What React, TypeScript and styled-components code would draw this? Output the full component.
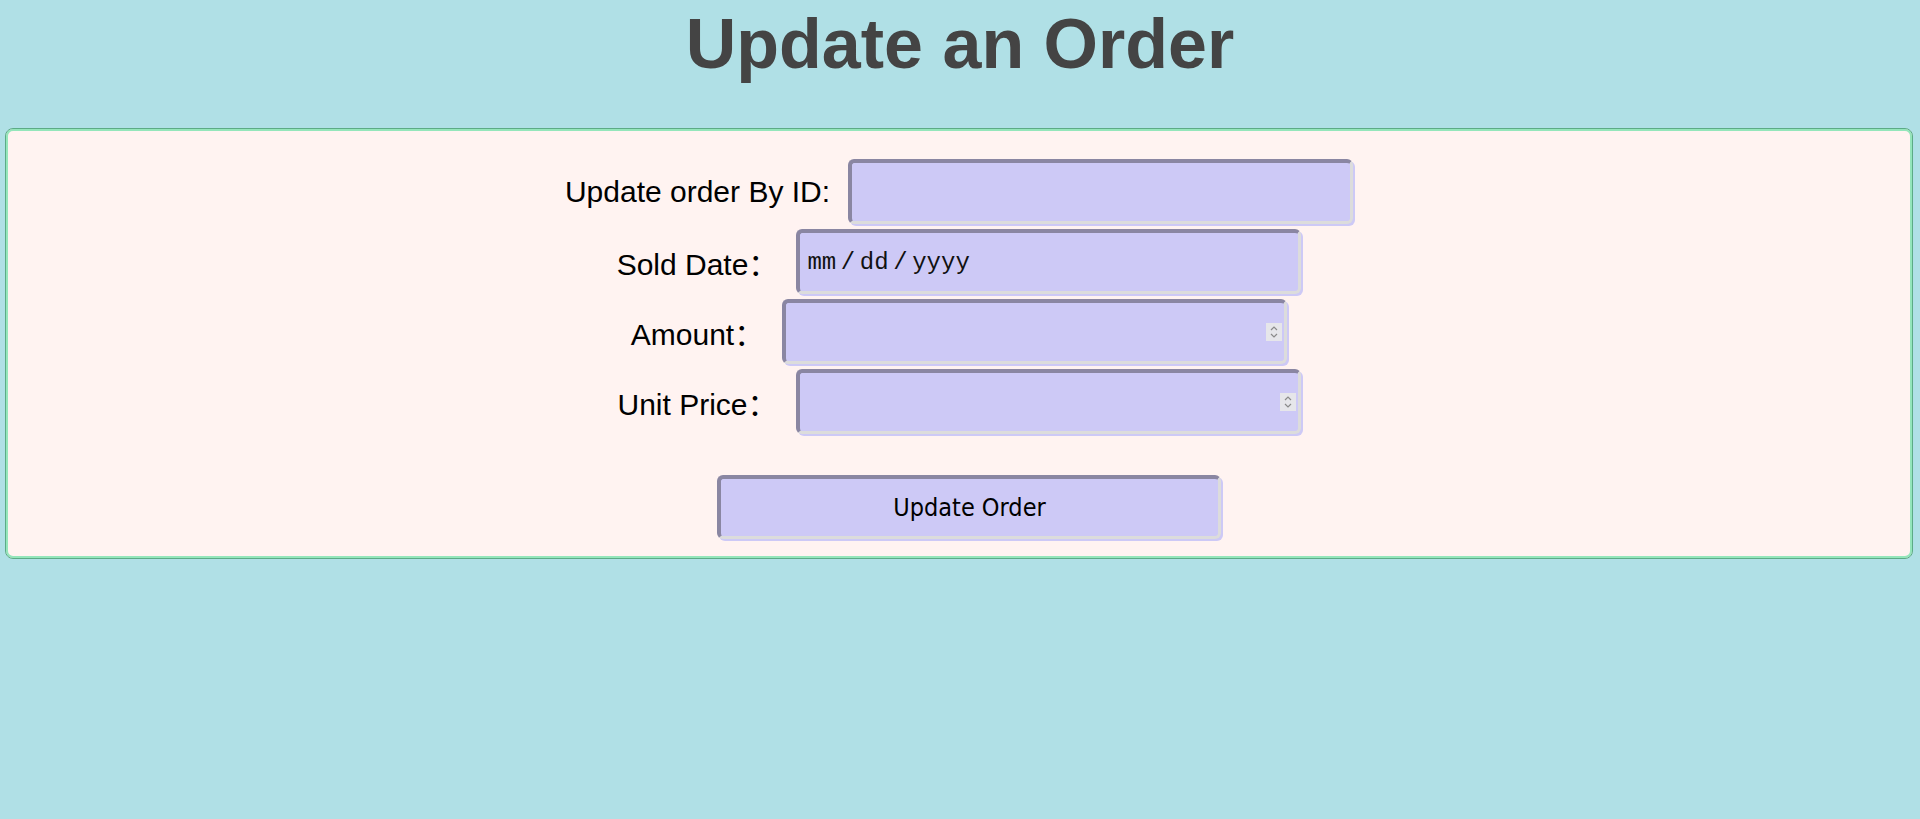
import React from 'react';
import styled, { createGlobalStyle } from 'styled-components';

const GlobalStyle = createGlobalStyle`
  html,
  body {
    margin: 0;
    padding: 0;
    background: #b0e0e6;
    font-family: 'Liberation Sans', Arial, sans-serif;
  }
`;

const Page = styled.main`
  min-height: 819px;
  padding-top: 4px;
  box-sizing: border-box;
`;

const Title = styled.h1`
  margin: 0 0 44px;
  text-align: center;
  font-family: 'Liberation Sans', Arial, sans-serif;
  font-size: 70px;
  font-weight: 700;
  color: #444444;
`;

const Panel = styled.form`
  margin: 0 7px 0 5px;
  padding: 30px 0 19px;
  background: #fff3f1;
  border: 1px solid #5cab86;
  box-shadow: inset 0 0 0 2px #94e6bb;
  border-radius: 8px;
  display: flex;
  flex-direction: column;
  align-items: center;
`;

const Row = styled.div`
  display: flex;
  align-items: center;
  justify-content: center;
  gap: 18px;
  margin-bottom: 5px;
`;

const Label = styled.label`
  font-family: 'Liberation Sans', 'Noto Sans CJK SC', sans-serif;
  font-size: 30px;
  color: #000;
  white-space: nowrap;
`;

const fieldLook = `
  box-sizing: border-box;
  width: 505px;
  height: 65px;
  background: #cdc9f6;
  border-style: solid;
  border-width: 4px 3px 3px 4px;
  border-color: #8a86a2 #dcdcdc #dcdcdc #8a86a2;
  border-radius: 6px;
  box-shadow: 2px 2px 0 0 #cdc9f6;
  outline: none;
`;

const Field = styled.input`
  ${fieldLook}
  padding: 0 6px;
  font-family: 'Liberation Mono', 'Courier New', monospace;
  font-size: 24px;
  color: #111;

  &::-webkit-calendar-picker-indicator {
    display: none;
  }

  &::-webkit-datetime-edit-text {
    padding: 0 0.15em;
  }

  &::-webkit-inner-spin-button,
  &::-webkit-outer-spin-button {
    -webkit-appearance: none;
    margin: 0;
  }

  &[type='number'] {
    -moz-appearance: textfield;
  }
`;

const NumberWrap = styled.span`
  position: relative;
  display: inline-block;
`;

const Spinner = styled.span`
  position: absolute;
  right: 5px;
  top: 50%;
  transform: translateY(-50%);
  width: 16px;
  height: 18px;
  background: #e6e6ea;
  display: flex;
  align-items: center;
  justify-content: center;
  pointer-events: none;
`;

const SubmitButton = styled.button`
  ${fieldLook}
  margin-top: 36px;
  margin-left: 20px;
  width: 504px;
  height: 64px;
  font-family: 'DejaVu Sans Condensed', 'DejaVu Sans', sans-serif;
  font-size: 25px;
  color: #000;
  cursor: pointer;
`;

const SpinIcon = () => (
  <svg width="10" height="14" viewBox="0 0 10 14" fill="none" stroke="#8a8a8a" strokeWidth="1.2">
    <path d="M2 5 L5 2 L8 5" />
    <path d="M2 9 L5 12 L8 9" />
  </svg>
);

const NumberField = ({ id }: { id: string }) => (
  <NumberWrap>
    <Field id={id} type="number" />
    <Spinner>
      <SpinIcon />
    </Spinner>
  </NumberWrap>
);

export default function App() {
  return (
    <Page>
      <GlobalStyle />
      <Title>Update an Order</Title>
      <Panel onSubmit={(e) => e.preventDefault()}>
        <Row>
          <Label htmlFor="orderId">Update order By ID:</Label>
          <Field id="orderId" type="text" />
        </Row>
        <Row>
          <Label htmlFor="soldDate">Sold Date：</Label>
          <Field id="soldDate" type="date" />
        </Row>
        <Row>
          <Label htmlFor="amount">Amount：</Label>
          <NumberField id="amount" />
        </Row>
        <Row>
          <Label htmlFor="unitPrice">Unit Price：</Label>
          <NumberField id="unitPrice" />
        </Row>
        <SubmitButton type="submit">Update Order</SubmitButton>
      </Panel>
    </Page>
  );
}
